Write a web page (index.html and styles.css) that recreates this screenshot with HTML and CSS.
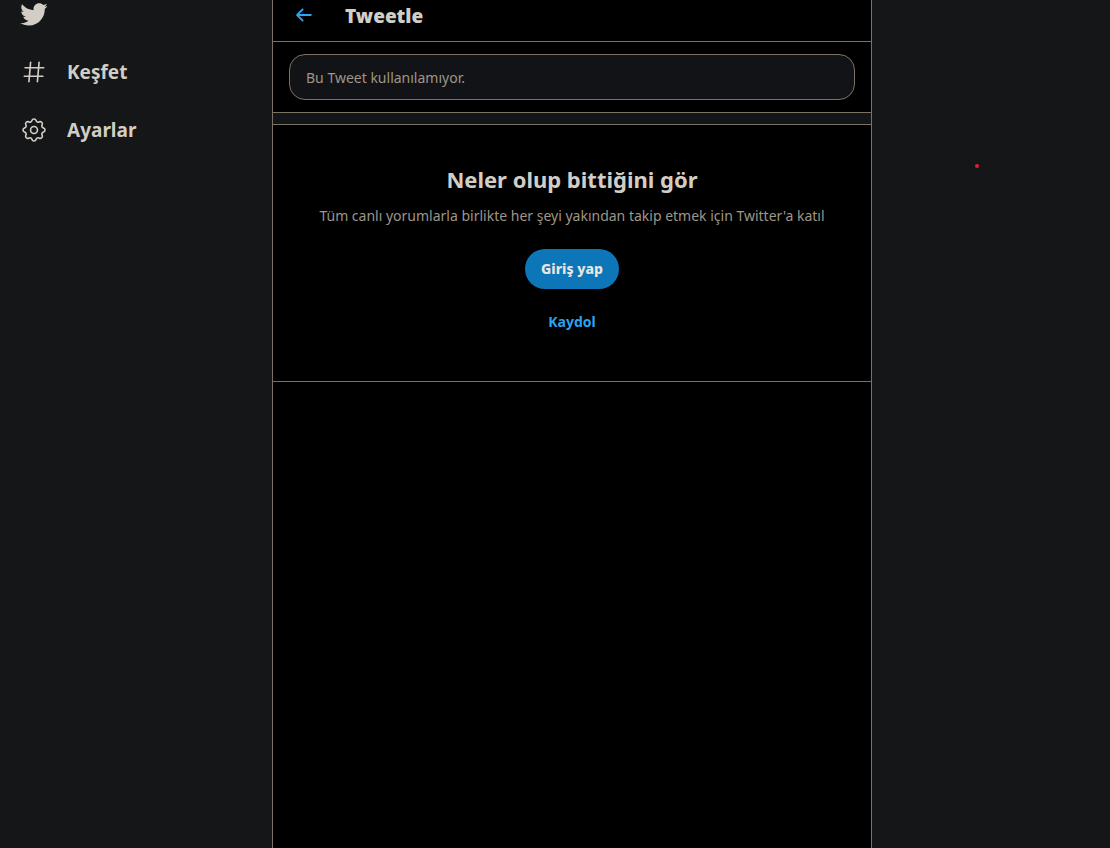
FILE: index.html
```html
<!DOCTYPE html>
<html lang="tr">
<head>
<meta charset="utf-8">
<meta name="viewport" content="width=device-width, initial-scale=1">
<title>Tweetle</title>
<link rel="stylesheet" href="styles.css">
</head>
<body>
<div class="layout">
  <header class="sidebar">
    <a class="brand" href="#" aria-label="Twitter">
      <svg class="brand-icon" viewBox="0 0 24 24" aria-hidden="true"><path d="M23.643 4.937c-.835.37-1.732.62-2.675.733.962-.576 1.7-1.49 2.048-2.578-.9.534-1.897.922-2.958 1.13-.85-.904-2.06-1.47-3.4-1.47-2.572 0-4.658 2.086-4.658 4.66 0 .364.042.718.12 1.06-3.873-.195-7.304-2.05-9.602-4.868-.4.69-.63 1.49-.63 2.342 0 1.616.823 3.043 2.072 3.878-.764-.025-1.482-.234-2.11-.583v.06c0 2.257 1.605 4.14 3.737 4.568-.392.106-.803.162-1.227.162-.3 0-.593-.028-.877-.082.593 1.85 2.313 3.198 4.352 3.234-1.595 1.25-3.604 1.995-5.786 1.995-.376 0-.747-.022-1.112-.065 2.062 1.323 4.51 2.093 7.14 2.093 8.57 0 13.255-7.098 13.255-13.254 0-.2-.005-.402-.014-.602.91-.658 1.7-1.477 2.323-2.41z"/></svg>
    </a>
    <nav class="nav">
      <a class="nav-link" href="#">
        <svg class="nav-icon" viewBox="0 0 24 24" aria-hidden="true"><path d="M21 7.337h-3.93l.372-4.272c.036-.412-.27-.775-.682-.812-.417-.03-.776.27-.812.683l-.383 4.4h-6.32l.37-4.27c.037-.413-.27-.776-.68-.813-.42-.03-.777.27-.813.683l-.382 4.4H3.782c-.414 0-.75.337-.75.75s.336.75.75.75H7.61l-.55 6.327H3c-.414 0-.75.336-.75.75s.336.75.75.75h3.93l-.372 4.272c-.036.412.27.775.682.812l.066.003c.385 0 .712-.295.746-.686l.383-4.4h6.32l-.37 4.27c-.036.413.27.776.682.813l.066.003c.385 0 .712-.295.746-.686l.382-4.4h3.957c.413 0 .75-.337.75-.75s-.337-.75-.75-.75H16.39l.55-6.327H21c.414 0 .75-.336.75-.75s-.336-.75-.75-.75zm-6.115 7.826h-6.32l.55-6.326h6.32l-.55 6.326z"/></svg>
        <span>Keşfet</span>
      </a>
      <a class="nav-link" href="#">
        <svg class="nav-icon nav-icon-line" viewBox="0 0 24 24" aria-hidden="true"><circle cx="12" cy="12" r="3.2"/><path d="M10.05 3.21A2.1 2.1 0 0 1 13.95 3.21A1.8 1.8 0 0 0 16.84 4.41A2.1 2.1 0 0 1 19.59 7.16A1.8 1.8 0 0 0 20.79 10.05A2.1 2.1 0 0 1 20.79 13.95A1.8 1.8 0 0 0 19.59 16.84A2.1 2.1 0 0 1 16.84 19.59A1.8 1.8 0 0 0 13.95 20.79A2.1 2.1 0 0 1 10.05 20.79A1.8 1.8 0 0 0 7.16 19.59A2.1 2.1 0 0 1 4.41 16.84A1.8 1.8 0 0 0 3.21 13.95A2.1 2.1 0 0 1 3.21 10.05A1.8 1.8 0 0 0 4.41 7.16A2.1 2.1 0 0 1 7.16 4.41A1.8 1.8 0 0 0 10.05 3.21z"/></svg>
        <span>Ayarlar</span>
      </a>
    </nav>
  </header>
  <main class="column">
    <div class="topbar">
      <button class="back" type="button" aria-label="Geri">
        <svg class="back-icon" viewBox="0 0 24 24" aria-hidden="true"><path d="M20 11H7.414l4.293-4.293c.39-.39.39-1.023 0-1.414s-1.023-.39-1.414 0l-6 6c-.39.39-.39 1.023 0 1.414l6 6c.195.195.45.293.707.293s.512-.098.707-.293c.39-.39.39-1.023 0-1.414L7.414 13H20c.553 0 1-.447 1-1s-.447-1-1-1z"/></svg>
      </button>
      <h1 class="title">Tweetle</h1>
    </div>
    <div class="notice-row">
      <p class="notice">Bu Tweet kullanılamıyor.</p>
    </div>
    <div class="divider"></div>
    <section class="join">
      <h2 class="join-title">Neler olup bittiğini gör</h2>
      <p class="join-text">Tüm canlı yorumlarla birlikte her şeyi yakından takip etmek için Twitter'a katıl</p>
      <button class="login" type="button">Giriş yap</button>
      <a class="signup" href="#">Kaydol</a>
    </section>
  </main>
  <aside class="side"><span class="dot"></span></aside>
</div>
</body>
</html>
```
FILE: styles.css
```css
* {
  box-sizing: border-box;
}

body {
  margin: 0;
  background: #141617;
  color: #d2cec6;
  font-family: "Segoe UI", "Noto Sans", sans-serif;
  font-size: 14px;
  line-height: 20px;
}

h1,
h2,
p {
  margin: 0;
}

a {
  color: inherit;
  text-decoration: none;
}

button {
  border: 0;
  font: inherit;
  cursor: pointer;
}

svg {
  display: block;
  fill: currentColor;
}

.layout {
  display: grid;
  grid-template-columns: 272px minmax(0, 600px) minmax(0, 1fr);
  min-height: 100vh;
}

.brand {
  display: block;
  padding: 0 19px;
}

.brand-icon {
  width: 29px;
  height: 29px;
}

.nav {
  display: grid;
  gap: 10px;
  padding: 19px 21px;
}

.nav-link {
  display: flex;
  align-items: center;
  gap: 20px;
  height: 48px;
  font-size: 19px;
  font-weight: 700;
}

.nav-icon {
  width: 26px;
  height: 26px;
}

.nav-icon-line {
  fill: none;
  stroke: currentColor;
  stroke-width: 1.5;
}

.column {
  background: #000;
  border: solid #7c7264;
  border-width: 0 1px;
}

.topbar {
  display: flex;
  align-items: flex-start;
  gap: 30px;
  padding: 4px 19px 13px;
  border-bottom: 1px solid #7c7264;
}

.back {
  padding: 0;
  background: none;
  color: #2ba3ef;
}

.back-icon {
  width: 23px;
  height: 22px;
}

.title {
  font-size: 19px;
  font-weight: 900;
  line-height: 24px;
}

.notice-row {
  padding: 12px 16px;
  border-bottom: 1px solid #7c7264;
}

.notice {
  padding: 13px 16px 11px;
  border: 1px solid #7c7264;
  border-radius: 16px;
  background: #121317;
  color: #9e9689;
}

.divider {
  height: 11px;
  background: #131619;
}

.join {
  display: flex;
  flex-direction: column;
  align-items: center;
  padding: 39px 32px 40px;
  border: solid #7c7264;
  border-width: 1px 0;
  text-align: center;
}

.join-title {
  font-size: 22px;
  line-height: 30px;
}

.join-text {
  margin: 12px 0 23px;
  color: #9e9689;
}

.login {
  height: 40px;
  padding: 0 16px;
  border-radius: 20px;
  background: #0c76b8;
  color: #e8e6e3;
  font-weight: 800;
}

.signup {
  margin: 23px 0 9px;
  color: #2ba3ef;
  font-weight: 700;
}

.side {
  padding: 164px 103px;
}

.dot {
  display: block;
  width: 4px;
  height: 4px;
  border-radius: 2px;
  background: #e0202c;
}
```
